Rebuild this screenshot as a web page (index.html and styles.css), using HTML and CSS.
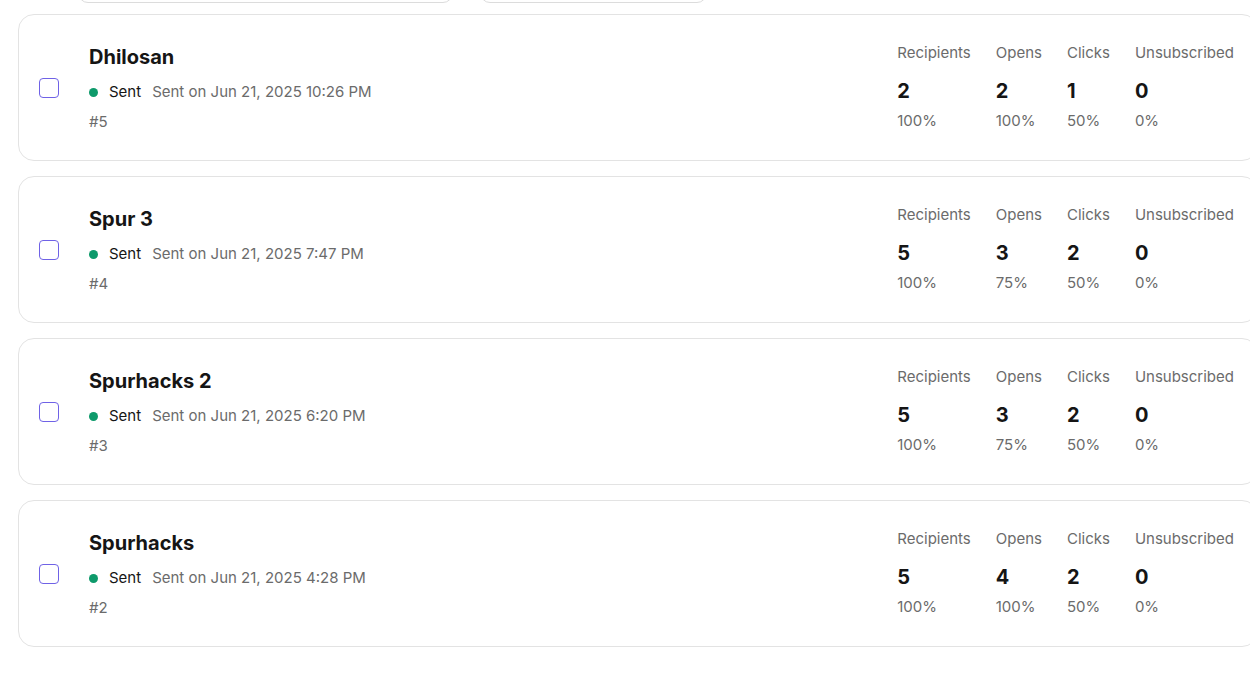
FILE: index.html
```html
<!DOCTYPE html>
<html lang="en">
<head>
<meta charset="utf-8">
<title>Campaigns</title>
<link rel="stylesheet" href="styles.css">
</head>
<body>
<div class="page">
  <div class="toolbar">
    <div class="pill pill-search"></div>
    <div class="pill pill-filter"></div>
  </div>
  <div class="list">
    <div class="card">
      <div class="left">
        <span class="checkbox"></span>
        <div class="info">
          <div class="title">Dhilosan</div>
          <div class="status"><span class="dot"></span><span class="state">Sent</span><span class="date">Sent on Jun 21, 2025 10:26 PM</span></div>
          <div class="num">#5</div>
        </div>
      </div>
      <div class="stats">
        <div class="stat"><div class="label">Recipients</div><div class="value">2</div><div class="pct">100%</div></div>
        <div class="stat"><div class="label">Opens</div><div class="value">2</div><div class="pct">100%</div></div>
        <div class="stat"><div class="label">Clicks</div><div class="value">1</div><div class="pct">50%</div></div>
        <div class="stat"><div class="label">Unsubscribed</div><div class="value">0</div><div class="pct">0%</div></div>
      </div>
    </div>
    <div class="card">
      <div class="left">
        <span class="checkbox"></span>
        <div class="info">
          <div class="title">Spur 3</div>
          <div class="status"><span class="dot"></span><span class="state">Sent</span><span class="date">Sent on Jun 21, 2025 7:47 PM</span></div>
          <div class="num">#4</div>
        </div>
      </div>
      <div class="stats">
        <div class="stat"><div class="label">Recipients</div><div class="value">5</div><div class="pct">100%</div></div>
        <div class="stat"><div class="label">Opens</div><div class="value">3</div><div class="pct">75%</div></div>
        <div class="stat"><div class="label">Clicks</div><div class="value">2</div><div class="pct">50%</div></div>
        <div class="stat"><div class="label">Unsubscribed</div><div class="value">0</div><div class="pct">0%</div></div>
      </div>
    </div>
    <div class="card">
      <div class="left">
        <span class="checkbox"></span>
        <div class="info">
          <div class="title">Spurhacks 2</div>
          <div class="status"><span class="dot"></span><span class="state">Sent</span><span class="date">Sent on Jun 21, 2025 6:20 PM</span></div>
          <div class="num">#3</div>
        </div>
      </div>
      <div class="stats">
        <div class="stat"><div class="label">Recipients</div><div class="value">5</div><div class="pct">100%</div></div>
        <div class="stat"><div class="label">Opens</div><div class="value">3</div><div class="pct">75%</div></div>
        <div class="stat"><div class="label">Clicks</div><div class="value">2</div><div class="pct">50%</div></div>
        <div class="stat"><div class="label">Unsubscribed</div><div class="value">0</div><div class="pct">0%</div></div>
      </div>
    </div>
    <div class="card">
      <div class="left">
        <span class="checkbox"></span>
        <div class="info">
          <div class="title">Spurhacks</div>
          <div class="status"><span class="dot"></span><span class="state">Sent</span><span class="date">Sent on Jun 21, 2025 4:28 PM</span></div>
          <div class="num">#2</div>
        </div>
      </div>
      <div class="stats">
        <div class="stat"><div class="label">Recipients</div><div class="value">5</div><div class="pct">100%</div></div>
        <div class="stat"><div class="label">Opens</div><div class="value">4</div><div class="pct">100%</div></div>
        <div class="stat"><div class="label">Clicks</div><div class="value">2</div><div class="pct">50%</div></div>
        <div class="stat"><div class="label">Unsubscribed</div><div class="value">0</div><div class="pct">0%</div></div>
      </div>
    </div>
  </div>
</div>
</body>
</html>
```

FILE: styles.css
```css
html, body {
  margin: 0;
  padding: 0;
  background: #ffffff;
  overflow: hidden;
}
body {
  font-family: Inter, "Noto Sans", sans-serif;
  color: #111111;
}
.page {
  width: 1240px;
  margin-left: 18px;
}
.toolbar {
  display: flex;
  gap: 27px;
  margin-top: -33px;
  padding-left: 60px;
  height: 36px;
}
.pill {
  height: 36px;
  box-sizing: border-box;
  border: 1px solid #dcdcdc;
  border-radius: 10px;
  background: #fff;
}
.pill-search { width: 375px; }
.pill-filter { width: 227px; }
.list {
  margin-top: 11px;
  display: flex;
  flex-direction: column;
  gap: 15px;
}
.card {
  display: flex;
  justify-content: space-between;
  align-items: center;
  border: 1px solid #e3e3e3;
  border-radius: 16px;
  padding: 28px 23px 28px 20px;
  background: #fff;
}
.left {
  display: flex;
  align-items: center;
  gap: 30px;
}
.checkbox {
  width: 20px;
  height: 20px;
  box-sizing: border-box;
  border: 1.5px solid #6f62e6;
  border-radius: 4px;
  background: #fff;
}
.title {
  font-size: 20px;
  line-height: 28px;
  font-weight: 700;
  color: #151515;
}
.status {
  display: flex;
  align-items: center;
  margin-top: 11px;
  font-size: 15px;
  line-height: 20px;
}
.dot {
  width: 9px;
  height: 9px;
  border-radius: 50%;
  background: #0e9a6b;
  margin-right: 11px;
}
.state {
  color: #161616;
  margin-right: 11px;
}
.date {
  color: #6b6b6b;
}
.num {
  margin-top: 10px;
  font-size: 15px;
  line-height: 20px;
  color: #6b6b6b;
}
.stats {
  display: flex;
  gap: 25px;
  margin-top: -2px;
}
.label {
  font-size: 15px;
  line-height: 20px;
  color: #6b6b6b;
}
.value {
  margin-top: 14px;
  font-size: 20px;
  line-height: 28px;
  font-weight: 700;
  color: #151515;
}
.pct {
  margin-top: 6px;
  font-size: 15px;
  line-height: 20px;
  color: #6b6b6b;
}
```
